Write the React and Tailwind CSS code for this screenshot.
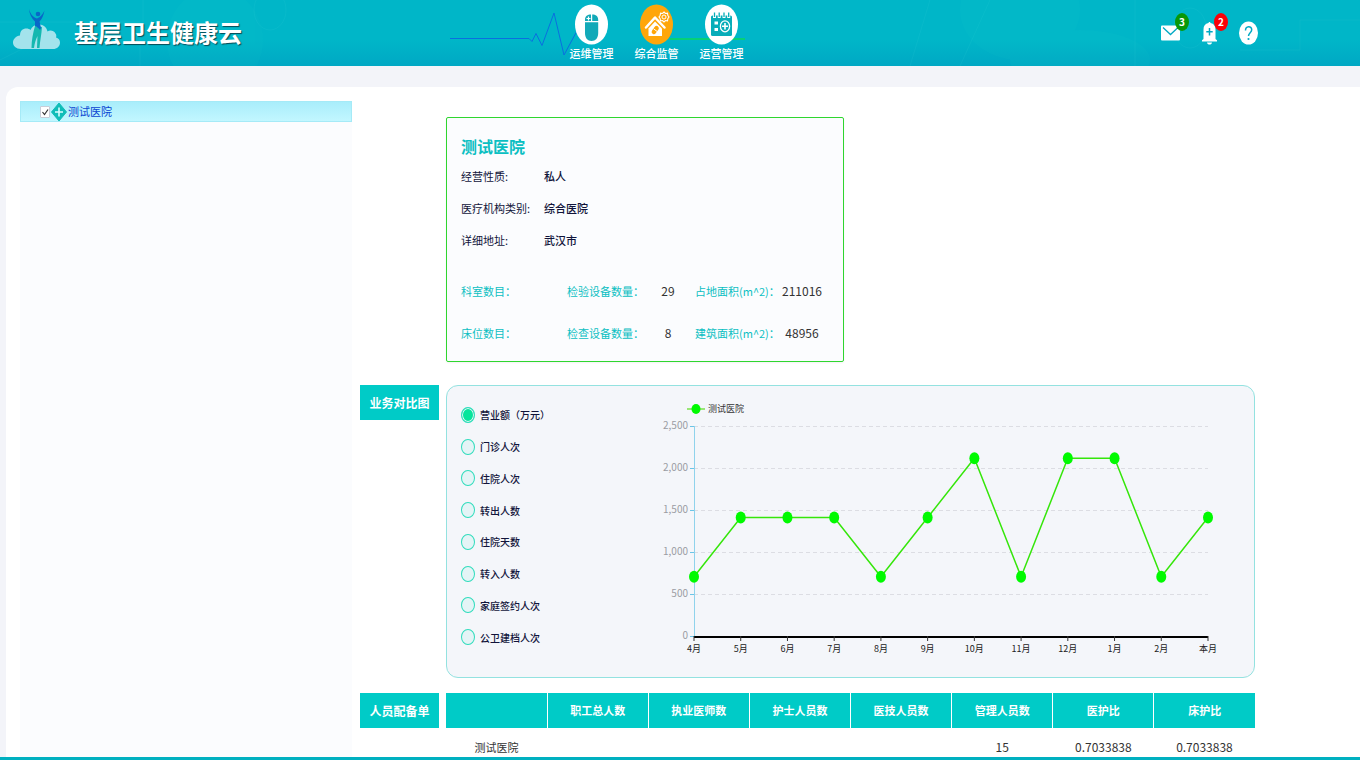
import { useState } from "react";
import clsx from "clsx";

const NAV_ITEMS = [
  { id: "ops", label: "运维管理", Icon: MouseIcon },
  { id: "supervise", label: "综合监管", Icon: HouseIcon },
  { id: "business", label: "运营管理", Icon: PlannerIcon },
];

const BASIC_INFO = [
  ["经营性质:", "私人"],
  ["医疗机构类别:", "综合医院"],
  ["详细地址:", "武汉市"],
];

const STATS = [
  ["科室数目：", "", "检验设备数量：", "29", "占地面积(m^2)：", "211016"],
  ["床位数目：", "", "检查设备数量：", "8", "建筑面积(m^2)：", "48956"],
];

const METRICS = [
  "营业额（万元）",
  "门诊人次",
  "住院人次",
  "转出人数",
  "住院天数",
  "转入人数",
  "家庭签约人次",
  "公卫建档人次",
];

const MONTHS = ["4月", "5月", "6月", "7月", "8月", "9月", "10月", "11月", "12月", "1月", "2月", "本月"];
const VALUES = [705, 1410, 1410, 1410, 705, 1410, 2115, 705, 2115, 2115, 705, 1410];
const TICKS = [0, 500, 1000, 1500, 2000, 2500];

const STAFF_COLUMNS = ["", "职工总人数", "执业医师数", "护士人员数", "医技人员数", "管理人员数", "医护比", "床护比"];
const STAFF_ROWS = [["测试医院", "", "", "", "", "15", "0.7033838", "0.7033838"]];

function MouseIcon() {
  return (
    <svg viewBox="0 0 33 41" className="h-[41px] w-[33px]" aria-hidden="true">
      <ellipse cx="16.5" cy="20.5" rx="16.5" ry="20" fill="#fff" />
      <path d="M10 17v-1c0-4 2.500-5.500 6-5.500v6.500zM17.200 10.500c3.500 0 6 1.500 6 5.500v1h-6zM10 18.300h13.200v10.700c0 5-2.600 8-6.600 8s-6.600-3-6.600-8z" fill="#12a9b8" />
      <path d="M13.500 12.500v4M11.500 14.500h4" stroke="#fff" strokeWidth="1.200" />
    </svg>
  );
}

function HouseIcon() {
  return (
    <svg viewBox="0 0 33 41" className="h-[41px] w-[33px]" aria-hidden="true">
      <ellipse cx="16.5" cy="20.5" rx="16.500" ry="20" fill="#ffa60a" />
      <path d="M6 23.500 15 13.500l9.500 10" fill="none" stroke="#fff" strokeWidth="2.500" strokeLinecap="round" strokeLinejoin="round" />
      <path d="M8.500 24.500 15 17.500l7 7V32h-13.500z" fill="#fff" />
      <rect x="13" y="21.500" width="4.500" height="9" rx="2.200" transform="rotate(36 15.200 26)" fill="#ffa60a" />
      <path d="m13.500 24.800 3.600 2.600" stroke="#fff" />
      <path d="m24 8 1.500 1.500 2-.3.300 2 1.200 1.800-1.200 1.800-.3 2-2-.3-1.500 1.500-1.500-1.500-2 .3-.3-2L19 13l1.200-1.800.3-2 2 .3z" fill="none" stroke="#fff" strokeWidth="1.100" />
      <circle cx="24" cy="13" r="2" fill="none" stroke="#fff" />
    </svg>
  );
}

function PlannerIcon() {
  return (
    <svg viewBox="0 0 33 41" className="h-[41px] w-[33px]" aria-hidden="true">
      <ellipse cx="16.500" cy="20.500" rx="16.500" ry="20" fill="#fff" />
      <rect x="6" y="11.500" width="21" height="20.500" rx="1.500" fill="#08adb9" />
      <path d="M9.500 8v6M14.200 8v6M19 8v6M23.700 8v6" stroke="#fff" strokeWidth="3" />
      <path d="M9.500 8.500v4.500M14.200 8.500v4.500M19 8.500v4.500M23.700 8.500v4.500" stroke="#08adb9" strokeWidth="1.300" />
      <path d="M9.500 17.500h3.500v3H9.500zM9.500 24h3.500v3H9.500z" fill="#fff" />
      <ellipse cx="20" cy="22.300" rx="4.600" ry="5.500" fill="none" stroke="#fff" strokeWidth="1.300" />
      <path d="M20 19v6.600M17 22.300h6" stroke="#fff" strokeWidth="1.600" />
    </svg>
  );
}

function Logo() {
  return (
    <svg viewBox="0 0 48 42" className="h-[42px] w-12" aria-hidden="true">
      <path d="M8 41C3 41 0 38 0 34.500S3 28 7 27.500C7 23 9.500 20.500 13.500 20.500c1.500 0 3 .5 4 1.500 1.500-3.500 5-6 9-5.500 5 .5 7 3 8 7 2-1.500 6-1.500 8 2 1 1.500 1 2.500.5 4 2.500.5 4 2.500 4 5 0 4-3 6.500-7 6.500z" fill="#a3e3ec" />
      <path d="M22 18l7 1c-.500 8-2 13-2.500 21H24l.500-12c-2 4-3 8-3.500 12h-2.500c0-8 1.500-15 3.500-22z" fill="#13b8b0" />
      <path d="M16 1c1.500 5 4 8.500 8 9.500 3.500-1.200 5.500-4 7.500-8-1 5-2.500 8.500-5 11L28 20l-1 2c-1.500-2-3.500-3.500-5-4v-4.500C18.500 10.500 16.500 6 16 1z" fill="#0868c8" />
      <circle cx="25" cy="6" r="2.300" fill="#0868c8" />
    </svg>
  );
}

function MailIcon() {
  return (
    <svg viewBox="0 0 20 16" className="h-4 w-5" aria-hidden="true">
      <rect y="0.500" width="19" height="15" rx="1" fill="#fff" />
      <path d="m2 2.500 7.500 7 7.500-7" fill="none" stroke="#00a9c4" strokeWidth="1.300" />
    </svg>
  );
}

function BellIcon() {
  return (
    <svg viewBox="0 0 16 24" className="h-6 w-4" aria-hidden="true">
      <path d="M6.500 2c0-1.500 2-1.500 2 0 3.500.7 5 3 5 6.500V18l1.500 1.200V20.500H0V19.200L1.500 18V8.500C1.500 5 3 2.700 6.500 2z" fill="#fff" />
      <path d="M5 21.500h5c-.300 2.800-4.700 2.800-5 0z" fill="#fff" />
      <path d="M7.500 7v7.500M4.300 10.700h6.400" stroke="#00a9c4" strokeWidth="1.500" />
    </svg>
  );
}

function HelpIcon() {
  return (
    <svg viewBox="0 0 19 24" className="h-6 w-[19px]" aria-hidden="true">
      <ellipse cx="9.500" cy="12" rx="9.500" ry="11.500" fill="#fff" />
      <path d="M6.500 9.500c0-5 6.200-5 6.200-.8 0 3-3.200 3-3.200 6.300" fill="none" stroke="#00a9c4" strokeWidth="1.500" />
      <circle cx="9.500" cy="18" r="1.100" fill="#00a9c4" />
    </svg>
  );
}

function Badge({ className, children }) {
  return (
    <span
      className={clsx(
        "absolute flex h-[18px] w-[14px] items-center justify-center rounded-[50%] text-[10px] font-bold leading-none text-white",
        className
      )}
    >
      {children}
    </span>
  );
}

function HeaderBackdrop() {
  return (
    <svg
      viewBox="0 0 1360 66"
      preserveAspectRatio="none"
      className="absolute inset-0 h-full w-full"
      aria-hidden="true"
    >
      <g fill="#1fd0c8" opacity="0.080">
        <ellipse cx="215" cy="40" rx="48" ry="52" />
        <ellipse cx="235" cy="58" rx="18" ry="22" />
        <ellipse cx="1020" cy="10" rx="60" ry="50" />
        <ellipse cx="1080" cy="60" rx="70" ry="30" />
      </g>
      <g fill="none" stroke="#4fdbe0" opacity="0.100">
        <path d="M0 22h140v44M143 0v22M0 60l40-20M930 0l-20 66M960 66l30-66M1135 0v66M1240 50h60v-30h60" />
        <ellipse cx="270" cy="10" rx="16" ry="20" />
        <ellipse cx="1190" cy="28" rx="16" ry="20" />
      </g>
    </svg>
  );
}

function Header() {
  const [active, setActive] = useState("supervise");
  return (
    <header className="relative flex h-[66px] shrink-0 bg-linear-to-b from-[#00b6c8] from-60% to-[#00a8c4] text-white">
      <HeaderBackdrop />
      <div className="relative flex w-[559px] shrink-0 items-start gap-[13px] pl-[13px]">
        <div className="pt-2">
          <Logo />
        </div>
        <h1 className="pt-4 text-2xl font-bold leading-8 [text-shadow:1px_1px_1px_#064a55]">
          基层卫生健康云
        </h1>
      </div>
      <nav className="relative flex">
        <svg
          viewBox="0 0 300 66"
          className="absolute -left-[109px] top-0 h-[66px] w-[300px]"
          fill="none"
          aria-hidden="true"
        >
          <path d="M0 38.500h79l3 3 4-8 6 12L104 13l10 42 14-26" stroke="#0a6fe0" />
          <path d="M220 39h75" stroke="#08d95c" strokeWidth="1.500" />
        </svg>
        {NAV_ITEMS.map(({ id, label, Icon }) => (
          <button
            key={id}
            type="button"
            aria-current={active === id ? "page" : undefined}
            onClick={() => setActive(id)}
            className="relative flex w-[65px] flex-col items-center pt-1 text-[11px] font-medium leading-4"
          >
            <Icon />
            {label}
          </button>
        ))}
      </nav>
      <div className="relative ml-auto flex items-center gap-[21px] pr-[102px]">
        <button type="button" aria-label="消息" className="relative">
          <MailIcon />
          <Badge className="-top-3 left-[14px] bg-[#089808]">3</Badge>
        </button>
        <button type="button" aria-label="通知" className="relative">
          <BellIcon />
          <Badge className="-top-2 left-3 bg-[#fb0007]">2</Badge>
        </button>
        <button type="button" aria-label="帮助">
          <HelpIcon />
        </button>
      </div>
    </header>
  );
}

function HospitalTree() {
  return (
    <aside className="w-[332px] shrink-0 bg-[#fbfcfe]">
      <label className="flex h-[21px] items-center border border-[#a5eaf7] bg-linear-to-b from-[#a9edfb] to-[#c2f7ff] pl-[19px] text-[11px] text-[#0b46d2]">
        <input
          type="checkbox"
          defaultChecked
          className="peer h-3 w-[10px] appearance-none rounded-[1px] border border-[#c9cdd8] bg-white"
        />
        <svg
          viewBox="0 0 10 12"
          className="pointer-events-none -ml-[10px] hidden h-3 w-[10px] peer-checked:block"
          aria-hidden="true"
        >
          <path d="m2.500 6 2 2.500 3.500-5" fill="none" stroke="#333" strokeWidth="1.200" />
        </svg>
        <svg viewBox="0 0 16 20" className="mx-px h-5 w-4" aria-hidden="true">
          <path d="m8 1 7.500 9L8 19 .500 10z" fill="#0fbdb8" stroke="#0fbdb8" strokeLinejoin="round" />
          <path d="M8 5.500v9M4 10h8" stroke="#d8fbff" strokeWidth="1.600" />
        </svg>
        测试医院
      </label>
    </aside>
  );
}

function HospitalCard() {
  return (
    <section className="h-[245px] w-[398px] rounded-xs border border-[#2fd62f] bg-[#fbfcfe] px-[14px] pt-4 text-[11px] shadow-xs">
      <h2 className="text-base font-bold leading-6 text-[#0bbfc2]">测试医院</h2>
      <dl className="mt-[2px] grid grid-cols-[83px_1fr] leading-8 text-[#11143a]">
        {BASIC_INFO.map(([name, value]) => (
          <div key={name} className="contents">
            <dt>{name}</dt>
            <dd className="font-medium">{value}</dd>
          </div>
        ))}
      </dl>
      <dl className="mt-[14px] text-[#0bbfc2]">
        {STATS.map((row) => (
          <div
            key={row[0]}
            className="grid grid-cols-[60px_46px_74px_54px_80px_1fr] whitespace-nowrap leading-[42px]"
          >
            {row.map((cell, i) =>
              i % 2 === 0 ? (
                <dt key={i}>{cell}</dt>
              ) : (
                <dd key={i} className="text-center text-xs leading-[42px] text-[#333]">
                  {cell}
                </dd>
              )
            )}
          </div>
        ))}
      </dl>
    </section>
  );
}

function SectionLabel({ children }) {
  return (
    <h2 className="flex h-[35px] items-center justify-center self-start bg-[#00cbc7] text-xs font-bold text-white">
      {children}
    </h2>
  );
}

function LineChart() {
  const left = 40;
  const right = 554;
  const bottom = 237;
  const px = (i) => left + (i * (right - left)) / (MONTHS.length - 1);
  const py = (v) => bottom - (v / 2500) * 210;
  const points = VALUES.map((v, i) => `${px(i)},${py(v)}`).join(" ");

  return (
    <svg viewBox="0 0 586 261" className="min-w-0 flex-1" role="img" aria-label="业务对比图">
      <path d="M33 10h18" stroke="#7be04a" strokeWidth="1.500" />
      <ellipse cx="42" cy="10" rx="4.500" ry="5" fill="#00fa00" />
      <text x="54" y="13" className="fill-[#333] text-[9px]">
        测试医院
      </text>
      {TICKS.map((t) => (
        <g key={t}>
          {t > 0 && (
            <path d={`M${left} ${py(t) + 0.5}H${right}`} stroke="#dcdde3" strokeDasharray="4 3" />
          )}
          <path d={`M36 ${py(t) + 0.5}h4`} stroke="#6cc4e6" />
          <text x="34" y={py(t) + 3} textAnchor="end" className="fill-[#9a9ca3] text-[10px]">
            {t.toLocaleString("en-US")}
          </text>
        </g>
      ))}
      <path d={`M${left + 0.5} 27V${bottom}`} stroke="#8fd3ec" />
      <path d={`M${left} ${bottom + 1}H${right}`} stroke="#000" strokeWidth="2" />
      {MONTHS.map((m, i) => (
        <g key={m}>
          <path d={`M${px(i)} ${bottom}v5`} stroke="#333" />
          <text x={px(i)} y="253" textAnchor="middle" className="fill-[#222] text-[9px]">
            {m}
          </text>
        </g>
      ))}
      <polyline points={points} fill="none" stroke="#35e60a" strokeWidth="1.500" />
      {VALUES.map((v, i) => (
        <ellipse key={i} cx={px(i)} cy={py(v)} rx="5" ry="6" fill="#00fa00" />
      ))}
    </svg>
  );
}

function ComparePanel() {
  const [metric, setMetric] = useState(METRICS[0]);
  return (
    <section className="flex items-start rounded-xl border border-[#93e2e0] bg-[#f4f6fa] pb-[17px] pl-[14px] pr-[14px] pt-[13px]">
      <fieldset className="grid h-[254px] w-[193px] shrink-0 grid-rows-8 text-[10px] font-medium text-[#11143a]">
        {METRICS.map((name) => (
          <label key={name} className="flex items-center gap-[5px]">
            <input
              type="radio"
              name="metric"
              checked={metric === name}
              onChange={() => setMetric(name)}
              className="h-4 w-[14px] appearance-none rounded-[50%] border border-[#2fdcbc] bg-[#e4f4f6] checked:bg-[#06e59c] checked:shadow-[inset_0_0_0_1px_#e4f4f6]"
            />
            {name}
          </label>
        ))}
      </fieldset>
      <LineChart />
    </section>
  );
}

function StaffTable() {
  return (
    <table className="w-full table-fixed self-start text-center">
      <thead>
        <tr className="h-[35px] bg-[#00cbc7] text-[11px] text-white">
          {STAFF_COLUMNS.map((name, i) => (
            <th key={i} className="border-r border-white font-bold last:border-r-0">
              {name}
            </th>
          ))}
        </tr>
      </thead>
      <tbody>
        {STAFF_ROWS.map((row) => (
          <tr key={row[0]} className="h-[38px] text-xs text-[#333]">
            {row.map((cell, i) => (
              <td key={i} className="first:text-[11px]">
                {cell}
              </td>
            ))}
          </tr>
        ))}
      </tbody>
    </table>
  );
}

export default function App() {
  return (
    <div
      lang="zh-CN"
      className="flex h-screen flex-col overflow-hidden bg-[#f3f4f9] font-['Noto_Sans_CJK_SC',sans-serif]"
    >
      <Header />
      <main className="ml-[6px] mt-[21px] flex min-h-0 flex-1 overflow-hidden rounded-tl-xl bg-white pl-[14px] pt-[14px]">
        <HospitalTree />
        <div className="ml-2 mr-[105px] grid min-w-0 flex-1 grid-cols-[79px_1fr] content-start gap-x-[7px] pt-4">
          <div className="col-start-2 mb-[23px]">
            <HospitalCard />
          </div>
          <SectionLabel>业务对比图</SectionLabel>
          <div className="mb-[15px]">
            <ComparePanel />
          </div>
          <SectionLabel>人员配备单</SectionLabel>
          <StaffTable />
        </div>
      </main>
      <footer className="h-[3px] shrink-0 bg-[#00b0c0]" />
    </div>
  );
}
